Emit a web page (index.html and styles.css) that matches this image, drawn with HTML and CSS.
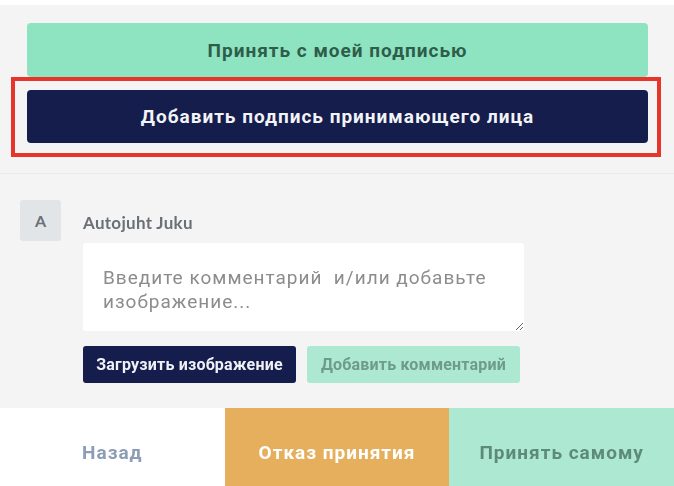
FILE: index.html
```html
<!DOCTYPE html>
<html lang="ru">
  <head>
    <meta charset="UTF-8" />
    <meta name="viewport" content="width=device-width, initial-scale=1.0" />
    <title>Принятие</title>
    <link rel="stylesheet" href="styles.css">
  </head>
  <body>
    <div class="top-strip"></div>
    <section class="actions">
      <button class="btn btn-mint">Принять с моей подписью</button>
      <div class="highlight">
        <button class="btn btn-navy">Добавить подпись принимающего лица</button>
      </div>
    </section>
    <section class="comment">
      <div class="avatar">A</div>
      <div class="comment-body">
        <div class="author">Autojuht Juku</div>
        <textarea class="comment-input" placeholder="Введите комментарий  и/или добавьте изображение..."></textarea>
        <div class="comment-buttons">
          <button class="sm-btn sm-navy">Загрузить изображение</button>
          <button class="sm-btn sm-mint">Добавить комментарий</button>
        </div>
      </div>
    </section>
    <footer class="bottom-bar">
      <button class="bar-btn bar-back">Назад</button>
      <button class="bar-btn bar-refuse">Отказ принятия</button>
      <button class="bar-btn bar-accept">Принять самому</button>
    </footer>
  </body>
</html>
```

FILE: styles.css
```css
* {
  margin: 0;
  padding: 0;
  box-sizing: border-box;
}

html,
body {
  height: 100%;
  overflow: hidden;
}

body {
  background: #f4f4f4;
  font-family: Roboto, "Liberation Sans", sans-serif;
}

button {
  font-family: inherit;
  border: none;
  cursor: pointer;
}

.top-strip {
  height: 5px;
  background: #fff;
}

.actions {
  padding: 18px 26px 16px 27px;
  border-bottom: 1px solid #ebebeb;
}

.btn {
  display: block;
  width: 100%;
  border-radius: 4px;
  font-size: 19px;
  font-weight: 700;
  letter-spacing: 1px;
}

.btn-mint {
  height: 54px;
  background: #8ee3c0;
  color: #2f5d4b;
}

.highlight {
  margin: 0 -13px 0 -16px;
  border: 4px solid #e8352c;
  padding: 9px 9px 10px 12px;
}

.btn-navy {
  height: 53px;
  background: #141d4b;
  color: #f2f3f7;
}

.comment {
  display: flex;
  padding: 26px 0 25px 20px;
}

.avatar {
  width: 41px;
  height: 41px;
  border-radius: 3px;
  background: #e2e5e7;
  color: #6a6f78;
  font-family: Lato, sans-serif;
  font-size: 16px;
  font-weight: 700;
  display: flex;
  align-items: center;
  justify-content: center;
}

.comment-body {
  margin-left: 22px;
}

.author {
  font-family: Lato, sans-serif;
  font-size: 17px;
  font-weight: 700;
  letter-spacing: 0.3px;
  color: #6b6f77;
  margin-top: 14px;
  line-height: 18px;
}

.comment-input {
  display: block;
  margin-top: 11px;
  width: 441px;
  height: 88px;
  border: none;
  border-radius: 3px;
  background: #fff;
  padding: 23px 20px;
  font-family: Roboto, sans-serif;
  font-size: 19px;
  letter-spacing: 1px;
  line-height: 24px;
  color: #333;
  resize: vertical;
  outline: none;
}

.comment-input::placeholder {
  color: #8c8c8c;
}

.comment-buttons {
  display: flex;
  gap: 11px;
  margin-top: 15px;
}

.sm-btn {
  width: 213px;
  height: 37px;
  border-radius: 3px;
  font-size: 16px;
  font-weight: 700;
  letter-spacing: 0.2px;
}

.sm-navy {
  background: #141d4b;
  color: #f0f1f6;
}

.sm-mint {
  background: #ade8d2;
  color: #6f9c8a;
}

.bottom-bar {
  display: flex;
  height: 88px;
}

.bar-btn {
  flex: 1;
  font-size: 19px;
  font-weight: 700;
  letter-spacing: 1px;
}

.bar-back {
  background: #fff;
  color: #8e9db6;
}

.bar-refuse {
  background: #e6af5e;
  color: #fff;
}

.bar-accept {
  background: #ade8d2;
  color: #5e8a7b;
}
```
